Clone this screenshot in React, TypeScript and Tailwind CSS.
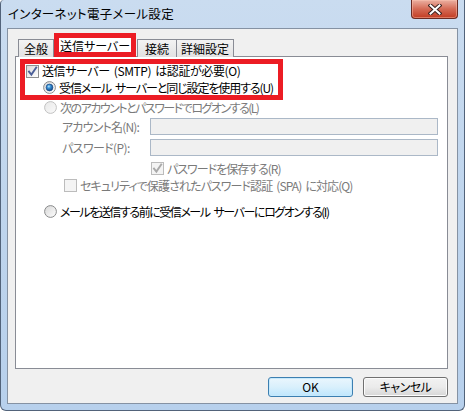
import React from "react";

const jp = "font-['Noto_Sans_CJK_JP','Noto_Sans',sans-serif] [font-feature-settings:'palt']";

function Sp() {
  return <span className="inline-block w-[4px]" />;
}

function Checkbox({ checked, disabled }: { checked?: boolean; disabled?: boolean }) {
  return (
    <span
      className={`relative inline-flex items-center justify-center w-[13px] h-[13px] shrink-0 border ${
        disabled ? "border-[#bcbcbc] bg-[#f4f4f4]" : "border-[#8e8f8f] bg-linear-to-br from-[#d9d9d9] to-[#ffffff]"
      }`}
    >
      {checked && (
        <svg width="11" height="11" viewBox="0 0 11 11">
          <path
            d="M2 5.6 L4.4 8.6 L9.2 1.6"
            fill="none"
            stroke={disabled ? "#a9a9a9" : "#4b5f98"}
            strokeWidth="1.9"
            strokeLinecap="square"
          />
        </svg>
      )}
    </span>
  );
}

function Radio({ checked, disabled }: { checked?: boolean; disabled?: boolean }) {
  return (
    <svg width="13" height="13" viewBox="0 0 13 13" className="shrink-0">
      <defs>
        <linearGradient id="rbg" x1="0" y1="0" x2="1" y2="1">
          <stop offset="0" stopColor="#d6d6d6" />
          <stop offset="1" stopColor="#ffffff" />
        </linearGradient>
        <linearGradient id="rbgd" x1="0" y1="0" x2="1" y2="1">
          <stop offset="0" stopColor="#e8e8e8" />
          <stop offset="1" stopColor="#fafafa" />
        </linearGradient>
        <radialGradient id="rdot" cx="0.4" cy="0.35" r="0.7">
          <stop offset="0" stopColor="#b7e6ff" />
          <stop offset="0.35" stopColor="#3d95d8" />
          <stop offset="1" stopColor="#0c3d7c" />
        </radialGradient>
      </defs>
      <circle
        cx="6.5"
        cy="6.5"
        r="5.9"
        fill={disabled ? "url(#rbgd)" : "url(#rbg)"}
        stroke={disabled ? "#c2c2c2" : "#8a8b8c"}
        strokeWidth="1"
      />
      {checked && <circle cx="6.5" cy="6.5" r="3.4" fill="url(#rdot)" stroke="#1b4a86" strokeWidth="0.7" />}
    </svg>
  );
}

function Row({
  className = "",
  children,
}: {
  className?: string;
  children: React.ReactNode;
}) {
  return <div className={`flex items-center h-[15px] whitespace-nowrap ${className}`}>{children}</div>;
}

export default function App() {
  const dis = "text-[#7a7a7a]";
  return (
    <div
      className={`${jp} relative w-[465px] h-[411px] overflow-hidden text-[12px] leading-none text-black bg-linear-to-b from-[#cadcf0] via-[#bfd5ed] to-[#b7d0ec] border-l border-r border-b border-[#52637a] rounded-bl-[6px] rounded-br-[6px] rounded-tl-[4px] flex flex-col px-[6px] pb-[6px] whitespace-nowrap`}
    >
      {/* Title bar */}
      <div className="relative h-[28px] shrink-0 flex items-start">
        <span className="mt-[8px] ml-[1px] text-[12.5px] text-black tracking-[0.3px]">インターネット電子メール設定</span>
        <div className="absolute right-[0px] top-0 w-[47px] h-[19px] rounded-b-[4px] border border-t-0 border-[#6b2b23] bg-linear-to-b from-[#eab0a2] via-[#d46a55] to-[#c23a20] flex items-center justify-center shadow-[inset_0_0_0_1px_rgba(255,200,180,0.45)]">
          <svg width="14" height="11" viewBox="0 0 14 11">
            <path d="M2.5 1.5 L11.5 9.5 M11.5 1.5 L2.5 9.5" stroke="#3c2320" strokeWidth="4" strokeLinecap="square" />
            <path d="M2.5 1.5 L11.5 9.5 M11.5 1.5 L2.5 9.5" stroke="#ffffff" strokeWidth="2" strokeLinecap="square" />
          </svg>
        </div>
      </div>

      {/* Client area */}
      <div className="flex-1 flex flex-col bg-[#f0f0f0] border border-[#8592a3] pl-[7px] pr-[9px] pt-[4px]">
        {/* Tabs */}
        <div className="flex items-end h-[24px] ml-[3px] relative z-10">
          <div className="w-[36px] h-[18px] border border-b-0 border-[#898c95] bg-linear-to-b from-[#f3f3f3] to-[#e2e2e2] flex items-center justify-center pt-[1px]">
            全般
          </div>
          <div className="w-[82px] h-[24px] border-[5px] border-[#ec1c24] bg-white flex items-center justify-center pt-[1px]">
            送信サーバー
          </div>
          <div className="w-[40px] h-[18px] border border-b-0 border-[#898c95] bg-linear-to-b from-[#f3f3f3] to-[#e2e2e2] flex items-center justify-center pt-[1px] ml-[1px]">
            接続
          </div>
          <div className="w-[57px] h-[18px] border border-b-0 border-l-0 border-[#898c95] bg-linear-to-b from-[#f3f3f3] to-[#e2e2e2] flex items-center justify-center pt-[1px]">
            詳細設定
          </div>
        </div>

        {/* Panel */}
        <div className="-mt-[1px] w-[433px] h-[313px] bg-white border border-[#898c95] flex flex-col">
          <div className="ml-[4px] mt-[2px] w-[263px] h-[41px] border-[5px] border-[#ec1c24] flex flex-col">
            <Row className="pl-[1px]">
              <Checkbox checked />
              <span className="ml-[3px] tracking-[-0.4px]">
                送信サーバー<Sp />(SMTP)<Sp />は認証が必要(O)
              </span>
            </Row>
            <Row className="pl-[18px] mt-[2px]">
              <Radio checked />
              <span className="ml-[3px] tracking-[-1.1px]">
                受信メール<Sp />サーバーと同じ設定を使用する(U)
              </span>
            </Row>
          </div>

          <Row className="ml-[28px]">
            <Radio disabled />
            <span className={`ml-[3px] tracking-[-1.5px] ${dis}`}>次のアカウントとパスワードでログオンする(L)</span>
          </Row>

          <div className="flex items-center h-[17px] mt-[3px] ml-[46px]">
            <span className={`w-[88px] tracking-[-0.8px] ${dis}`}>アカウント名(N):</span>
            <div className="w-[288px] h-[17px] border border-[#abb8c7] bg-[#f0f0f0]" />
          </div>
          <div className="flex items-center h-[17px] mt-[4px] ml-[46px]">
            <span className={`w-[88px] tracking-[-0.6px] ${dis}`}>パスワード(P):</span>
            <div className="w-[288px] h-[17px] border border-[#abb8c7] bg-[#f0f0f0]" />
          </div>

          <Row className="ml-[135px] mt-[5px]">
            <Checkbox checked disabled />
            <span className={`ml-[3px] tracking-[-1px] ${dis}`}>パスワードを保存する(R)</span>
          </Row>
          <Row className="ml-[48px] mt-[2px]">
            <Checkbox disabled />
            <span className={`ml-[3px] tracking-[-0.9px] ${dis}`}>
              セキュリティで保護されたパスワード認証<Sp />(SPA)<Sp />に対応(Q)
            </span>
          </Row>

          <Row className="ml-[28px] mt-[11px]">
            <Radio />
            <span className="ml-[3px] tracking-[-1.45px]">
              メールを送信する前に受信メール<Sp />サーバーにログオンする(I)
            </span>
          </Row>
        </div>

        {/* Buttons */}
        <div className="flex justify-end gap-[10px] mt-[8px] pr-0">
          <button className="w-[85px] h-[20px] rounded-[3px] border border-[#3c7fb1] bg-linear-to-b from-[#eaf6fd] via-[#d9f0fc] to-[#bee6fd] shadow-[inset_0_0_0_1px_#c6e9fc] text-[12px] leading-none flex items-center justify-center">
            OK
          </button>
          <button className="w-[85px] h-[20px] rounded-[3px] border border-[#707070] bg-linear-to-b from-[#f2f2f2] via-[#ebebeb] to-[#d6d6d6] shadow-[inset_0_0_0_1px_#fcfcfc] text-[12px] leading-none flex items-center justify-center tracking-[-0.5px]">
            キャンセル
          </button>
        </div>
      </div>
    </div>
  );
}
